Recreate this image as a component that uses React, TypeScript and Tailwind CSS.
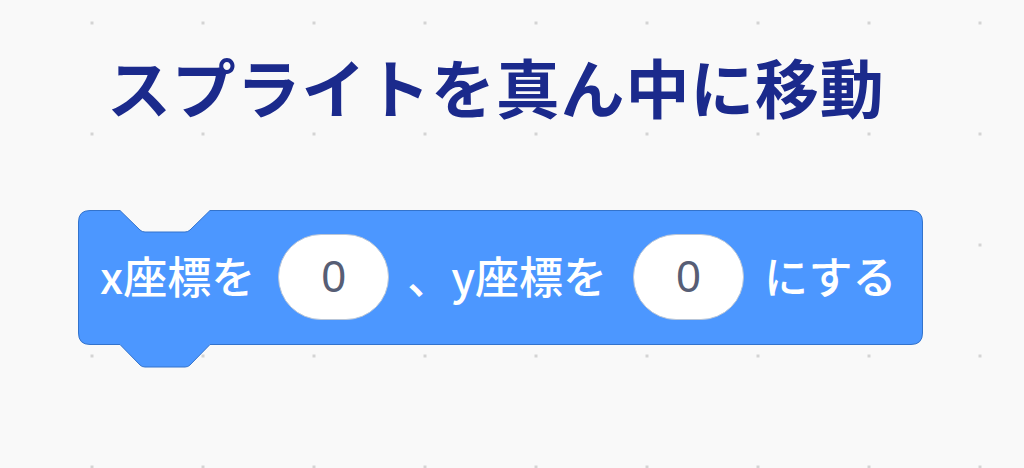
const jp = "font-['Noto_Sans_CJK_JP','Noto_Sans',sans-serif]";

function Pill({ value }: { value: string }) {
  return (
    <div className="flex h-[86px] w-[111px] shrink-0 items-center justify-center rounded-full border border-[#b9c6d8] bg-white">
      <span className="font-['Liberation_Sans',sans-serif] text-[44px] leading-none text-[#575e75]">{value}</span>
    </div>
  );
}

function BlockShape() {
  return (
    <svg className="absolute left-0 top-0" width="846" height="158" viewBox="0 0 846 158">
      <path
        d="M0.5 12 Q0.5 0.5 12 0.5 L42 0.5 L62 20 Q64 22 67 22 L107 22 Q110 22 112 20 L132 0.5 L833 0.5 Q844.5 0.5 844.5 12 L844.5 123 Q844.5 134.5 833 134.5 L132 134.5 L112 155 Q110 157 107 157 L67 157 Q64 157 62 155 L42 134.5 L12 134.5 Q0.5 134.5 0.5 123 Z"
        fill="#4c97ff"
        stroke="#3373cc"
        strokeWidth="1"
      />
    </svg>
  );
}

export default function App() {
  return (
    <div className="h-[468px] w-[1024px] overflow-hidden bg-[#f9f9f9] bg-[radial-gradient(circle,#d4d4d4_1.6px,transparent_1.8px)] bg-[size:111px_111px] bg-[position:36.5px_-32.5px]">
      <div className="flex flex-col pl-[107px] pt-[45px]">
        <h1 className={`${jp} text-[64px] font-bold leading-[80px] tracking-[0.8px] text-[#1b2a8c]`}>
          スプライトを真ん中に移動
        </h1>
      </div>
      <div className="ml-[78px] mt-[85px]">
        <div className="relative h-[135px] w-[846px]">
          <BlockShape />
          <div className={`${jp} relative flex h-[135px] items-center pl-[22px] text-[44px] font-medium leading-none text-white`}>
            <span className="-mt-[6px]">x座標を</span>
            <div className="ml-[23px] -mt-[2px]">
              <Pill value="0" />
            </div>
            <span className="ml-[18px] -mt-[6px]">、y座標を</span>
            <div className="ml-[26px] -mt-[2px]">
              <Pill value="0" />
            </div>
            <span className="ml-[20px] -mt-[6px]">にする</span>
          </div>
        </div>
      </div>
    </div>
  );
}
